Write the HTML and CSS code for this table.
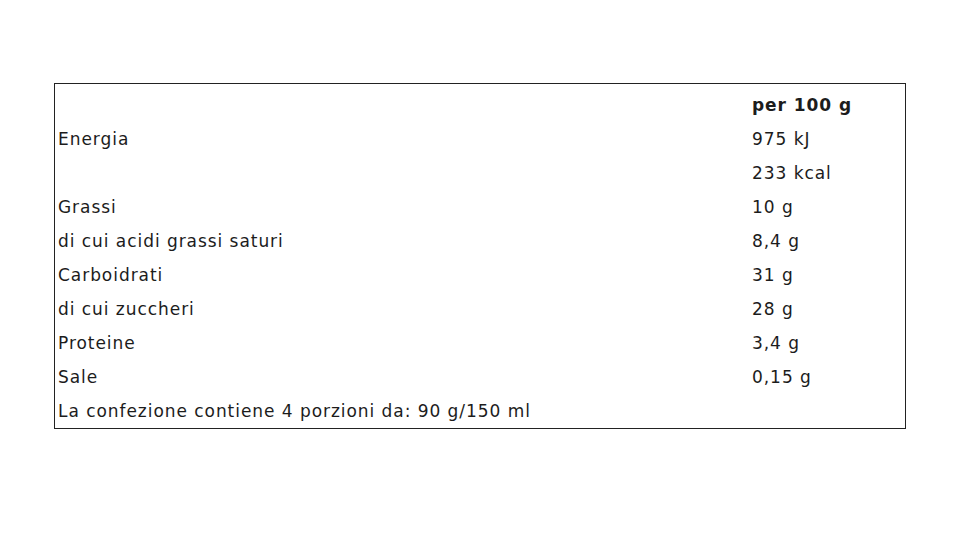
FILE: index.html
```html
<!DOCTYPE html>
<html lang="it">
<head>
<meta charset="utf-8">
<link rel="stylesheet" href="styles.css">
</head>
<body>
<div class="page">
  <table class="nutri">
    <tr><td class="label"></td><td class="val head">per 100 g</td></tr>
    <tr><td class="label">Energia</td><td class="val">975 kJ</td></tr>
    <tr><td class="label"></td><td class="val">233 kcal</td></tr>
    <tr><td class="label">Grassi</td><td class="val">10 g</td></tr>
    <tr><td class="label">di cui acidi grassi saturi</td><td class="val">8,4 g</td></tr>
    <tr><td class="label">Carboidrati</td><td class="val">31 g</td></tr>
    <tr><td class="label">di cui zuccheri</td><td class="val">28 g</td></tr>
    <tr><td class="label">Proteine</td><td class="val">3,4 g</td></tr>
    <tr><td class="label">Sale</td><td class="val">0,15 g</td></tr>
    <tr><td class="label" colspan="2">La confezione contiene 4 porzioni da: 90 g/150 ml</td></tr>
  </table>
</div>
</body>
</html>
```

FILE: styles.css
```css
html, body {
  margin: 0;
  padding: 0;
  background: #ffffff;
}
.page {
  width: 960px;
  height: 540px;
  padding-top: 83px;
  padding-left: 54px;
  box-sizing: border-box;
}
.nutri {
  width: 852px;
  border: 1px solid #222222;
  border-collapse: separate;
  border-spacing: 0;
  padding: 4px 0 0 0;
  font-family: "DejaVu Sans", sans-serif;
  font-size: 17px;
  letter-spacing: 0.95px;
  color: #1c1c1c;
}
.nutri td {
  height: 34px;
  padding: 0 3px;
  vertical-align: middle;
  white-space: nowrap;
}
.label {
  width: 688px;
}
.head {
  font-weight: bold;
}
```
